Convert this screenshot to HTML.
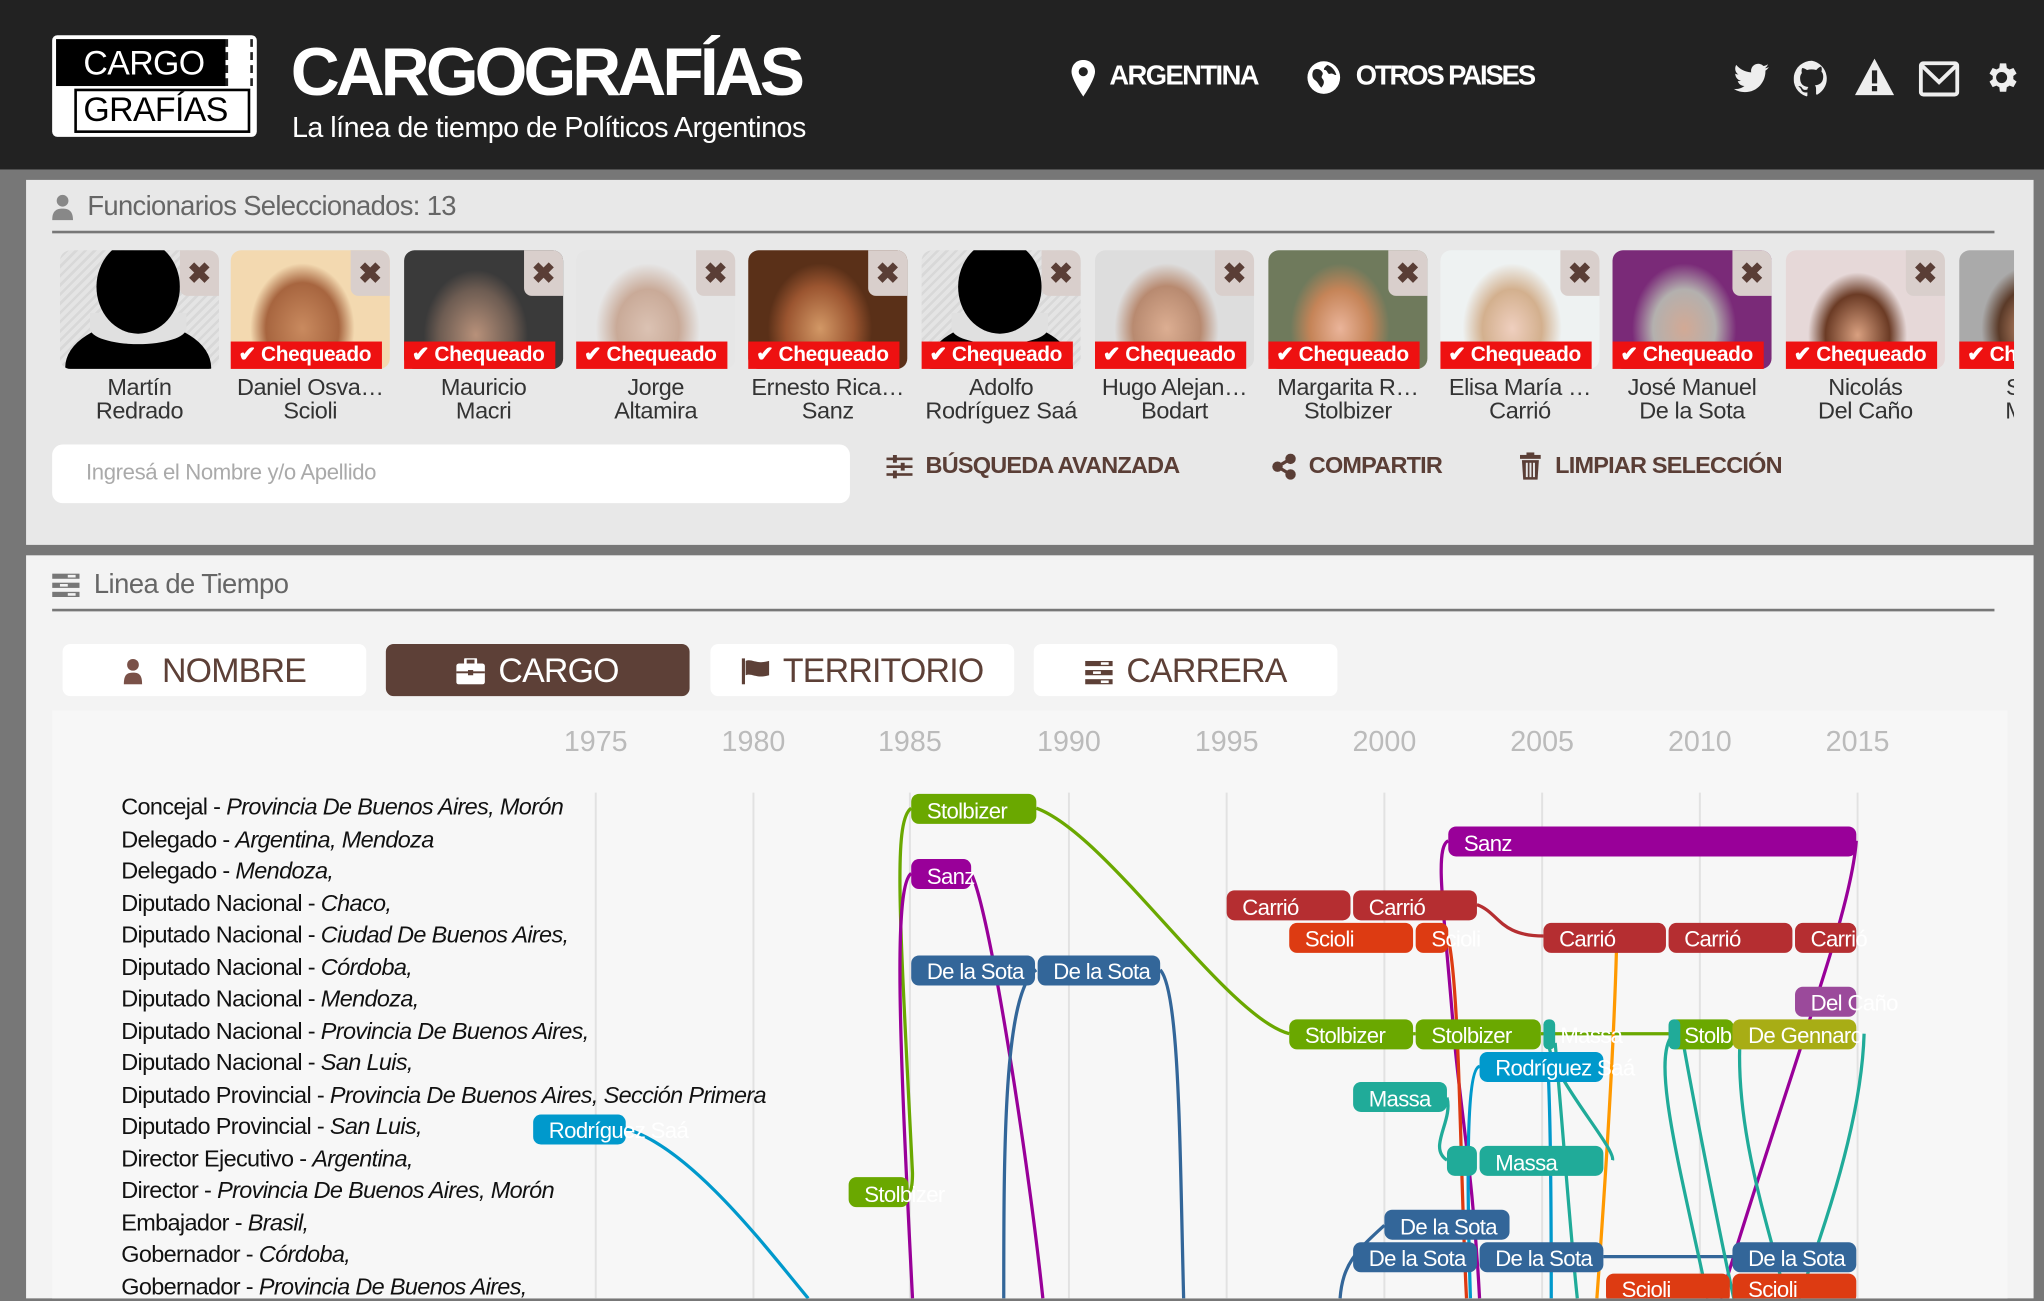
<!DOCTYPE html>
<html><head><meta charset="utf-8">
<style>
*{margin:0;padding:0;box-sizing:border-box}
html,body{width:2044px;height:1298px;overflow:hidden;background:#777}
#w{position:absolute;left:0;top:0;width:1568px;height:996px;transform:scale(1.30357);transform-origin:0 0;font-family:"Liberation Sans Narrow","Liberation Sans",sans-serif;background:#777}
.a{position:absolute}
.hdr{left:0;top:0;width:1568px;height:130px;background:#222}
.p1{left:20px;top:138px;width:1540px;height:280px;background:#e8e8e8}
.p2{left:20px;top:426px;width:1540px;height:570px;background:#f3f3f3}
.card{position:absolute;top:192px;width:122px}
.ph{position:absolute;left:0;top:0;width:122px;height:91px;border-radius:8px;overflow:hidden}
.chk{position:absolute;left:0;top:70px;width:116px;height:21px;background:#ee1111;color:#fff;font:bold 16px "Liberation Sans",sans-serif;line-height:21px;padding-left:6px;white-space:nowrap;letter-spacing:-0.3px}
.x{position:absolute;right:0;top:0;width:30px;height:35px;background:#d9cfcc;border-radius:0 8px 0 6px;color:#5a3e36;font:bold 22px "Liberation Sans",sans-serif;text-align:center;line-height:35px}
.nm{position:absolute;top:96px;left:-6px;width:134px;text-align:center;font-size:18px;line-height:18px;color:#333;white-space:nowrap;letter-spacing:-0.3px}
.btn{color:#5a3e36;font-weight:bold;font-size:18px;top:347px;letter-spacing:-0.6px}
.tab{top:494px;height:40px;width:233px;background:#fff;border-radius:6px;color:#5d4037;font-size:26px;text-align:center;line-height:40px;letter-spacing:-0.6px}
.yr{top:556px;color:#bbb;font-size:22px;width:60px;text-align:center;margin-left:-30px}
.lab{left:93px;font-size:18px;color:#111;white-space:nowrap;letter-spacing:-0.5px}
.lab i{font-style:italic}
</style></head><body><div id="w">
<div class="a hdr"></div>
<div class="a" style="left:40px;top:27px;width:157px;height:78px;background:#fff;border-radius:4px"></div>
<div class="a" style="left:43px;top:30px;width:130px;height:36px;background:#000"></div>
<div class="a" style="left:173px;top:30px;width:21px;height:36px;border-left:2px dashed #222;border-right:2px dashed #222;background:#fff"></div>
<div class="a" style="left:57px;top:68px;width:135px;height:34px;background:#fff;border:2px solid #000"></div>
<div class="a" style="left:64px;top:33px;color:#fff;font:26px 'Liberation Sans',sans-serif;letter-spacing:-0.5px">CARGO</div>
<div class="a" style="left:64px;top:69px;color:#000;font:26px 'Liberation Sans',sans-serif;letter-spacing:-0.5px">GRAFÍAS</div>
<div class="a" style="left:223px;top:26px;color:#fff;font-weight:bold;font-size:52px;letter-spacing:-3px">CARGOGRAFÍAS</div>
<div class="a" style="left:224px;top:85px;color:#fff;font-size:22px;letter-spacing:-0.4px">La línea de tiempo de Políticos Argentinos</div>
<svg class="a" style="left:821px;top:46px" width="20" height="28" viewBox="0 0 20 28"><path d="M10 0C4.5 0 1 4 1 9c0 6 9 19 9 19s9-13 9-19c0-5-3.5-9-9-9z" fill="#fff"/><circle cx="10" cy="9" r="3.5" fill="#222"/></svg>
<div class="a" style="left:851px;top:47px;color:#fff;font-size:21px;font-weight:bold;letter-spacing:-1.2px">ARGENTINA</div>
<svg class="a" style="left:1002px;top:46px" width="27" height="27" viewBox="0 0 28 28"><circle cx="14" cy="14" r="13" fill="#fff"/><path d="M6 8c3-2 6 0 7 2s-2 3 0 5 1 5-1 7c-2-2-3-5-5-6s-3-5-1-8zM17 4c3 1 6 4 7 8-2 0-3-2-5-1s-2-3-4-3 0-3 2-4z" fill="#222"/></svg>
<div class="a" style="left:1040px;top:47px;color:#fff;font-size:21px;font-weight:bold;letter-spacing:-1.6px">OTROS PAISES</div>
<svg class="a" style="left:1330px;top:48px" width="27" height="24" viewBox="0 0 24 20"><path d="M24 2.4c-.9.4-1.8.6-2.8.8 1-.6 1.8-1.6 2.2-2.7-1 .6-2 1-3.1 1.2A4.9 4.9 0 0 0 11.9 6C7.8 5.800 4.200 3.900 1.700.9c-1.4 2.4-.6 5.2 1.5 6.6-.8 0-1.6-.3-2.2-.6 0 2.4 1.7 4.4 3.9 4.9-.7.2-1.5.2-2.2.1.6 2 2.4 3.4 4.6 3.4A9.9 9.9 0 0 1 0 17.3 14 14 0 0 0 7.5 19.5c9.1 0 14.1-7.5 14.1-14.1v-.6c1-.7 1.8-1.6 2.4-2.4z" fill="#eee"/></svg>
<svg class="a" style="left:1376px;top:46px" width="28" height="28" viewBox="0 0 24 24"><path d="M12 .5a12 12 0 0 0-3.8 23.4c.6.1.8-.3.8-.6v-2c-3.3.7-4-1.6-4-1.6-.6-1.4-1.4-1.8-1.4-1.8-1-.7.1-.7.1-.7 1.2.1 1.8 1.2 1.8 1.2 1 1.8 2.8 1.3 3.5 1 .1-.8.4-1.3.7-1.6-2.7-.3-5.5-1.3-5.5-6 0-1.300.5-2.400 1.200-3.200-.1-.3-.5-1.5.1-3.2 0 0 1-.3 3.3 1.2a11.5 11.5 0 0 1 6 0C17.1 4.1 18.1 4.4 18.1 4.4c.7 1.7.2 2.9.1 3.2.8.8 1.2 1.9 1.2 3.2 0 4.6-2.8 5.6-5.5 5.9.4.4.8 1.1.8 2.2v3.3c0 .3.2.7.8.6A12 12 0 0 0 12 .5z" fill="#eee"/></svg>
<svg class="a" style="left:1422px;top:44px" width="32" height="30" viewBox="0 0 32 30"><path d="M16 1L31 29H1z" fill="#eee"/><rect x="14" y="10" width="4" height="10" fill="#222"/><rect x="14" y="22" width="4" height="4" fill="#222"/></svg>
<svg class="a" style="left:1472px;top:47px" width="31" height="27" viewBox="0 0 31 27"><rect x="1.5" y="1.5" width="28" height="24" rx="2" fill="none" stroke="#eee" stroke-width="3"/><path d="M2 3l13.5 13L29 3" fill="none" stroke="#eee" stroke-width="3"/></svg>
<svg class="a" style="left:1521px;top:45px" width="29" height="29" viewBox="0 0 24 24"><path d="M19.4 13a7.8 7.8 0 0 0 0-2l2.1-1.6-2-3.5-2.5 1a7 7 0 0 0-1.7-1L14.9 3h-4l-.4 2.9a7 7 0 0 0-1.7 1l-2.5-1-2 3.5L6.4 11a7.8 7.8 0 0 0 0 2l-2.1 1.6 2 3.5 2.5-1a7 7 0 0 0 1.7 1l.4 2.9h4l.4-2.9a7 7 0 0 0 1.7-1l2.5 1 2-3.5zM12 15.5A3.5 3.5 0 1 1 12 8.5a3.5 3.5 0 0 1 0 7z" fill="#eee"/></svg>

<div class="a p1"></div>
<svg class="a" style="left:40px;top:149px" width="16" height="20" viewBox="0 0 16 20"><circle cx="8" cy="5" r="4.5" fill="#888"/><path d="M0 20c0-7 3-9 8-9s8 2 8 9z" fill="#888"/></svg>
<div class="a" style="left:67px;top:147px;color:#666;font-size:21px;letter-spacing:-0.5px">Funcionarios Seleccionados: 13</div>
<div class="a" style="left:40px;top:177px;width:1490px;height:2px;background:#777"></div>
<div class="a" style="left:40px;top:186px;width:1505px;height:150px;overflow:hidden">
<div style="position:relative;left:-40px;top:-186px">
<div class="card" style="left:46px"><div class="ph" style="background:repeating-linear-gradient(135deg,#e4e4e4 0 3px,#d8d8d8 3px 5px)"><div class="a" style="left:4px;top:55px;width:112px;height:70px;border-radius:50% 50% 0 0;background:#000"></div><div class="a" style="left:23px;top:48px;width:74px;height:24px;border-radius:0 0 50% 50%;background:#e0e0e0"></div><div class="a" style="left:28px;top:-8px;width:64px;height:72px;border-radius:50%;background:#000"></div></div><div class="x">✖</div><div class="nm">Martín<br>Redrado</div></div>
<div class="card" style="left:177px"><div class="ph" style="background:radial-gradient(ellipse 40px 50px at 55px 60px,#c98a5f,#a7653f 70%,#f3d9b0)"></div><div class="chk">✔ Chequeado</div><div class="x">✖</div><div class="nm">Daniel Osva…<br>Scioli</div></div>
<div class="card" style="left:310px"><div class="ph" style="background:radial-gradient(ellipse 40px 50px at 55px 65px,#b8917a,#6d5c52 70%,#3a3a3a)"></div><div class="chk">✔ Chequeado</div><div class="x">✖</div><div class="nm">Mauricio<br>Macri</div></div>
<div class="card" style="left:442px"><div class="ph" style="background:radial-gradient(ellipse 40px 50px at 55px 60px,#dbc2b3,#c9aa98 60%,#e6e6e6)"></div><div class="chk">✔ Chequeado</div><div class="x">✖</div><div class="nm">Jorge<br>Altamira</div></div>
<div class="card" style="left:574px"><div class="ph" style="background:radial-gradient(ellipse 40px 50px at 55px 60px,#d29866,#9b5530 65%,#5a3018)"></div><div class="chk">✔ Chequeado</div><div class="x">✖</div><div class="nm">Ernesto Rica…<br>Sanz</div></div>
<div class="card" style="left:707px"><div class="ph" style="background:repeating-linear-gradient(135deg,#e4e4e4 0 3px,#d8d8d8 3px 5px)"><div class="a" style="left:4px;top:55px;width:112px;height:70px;border-radius:50% 50% 0 0;background:#000"></div><div class="a" style="left:23px;top:48px;width:74px;height:24px;border-radius:0 0 50% 50%;background:#e0e0e0"></div><div class="a" style="left:28px;top:-8px;width:64px;height:72px;border-radius:50%;background:#000"></div></div><div class="chk">✔ Chequeado</div><div class="x">✖</div><div class="nm">Adolfo<br>Rodríguez Saá</div></div>
<div class="card" style="left:840px"><div class="ph" style="background:radial-gradient(ellipse 40px 50px at 55px 60px,#dcae92,#b88a70 65%,#ddd)"></div><div class="chk">✔ Chequeado</div><div class="x">✖</div><div class="nm">Hugo Alejan…<br>Bodart</div></div>
<div class="card" style="left:973px"><div class="ph" style="background:radial-gradient(ellipse 38px 50px at 55px 60px,#eab49a,#c58458 60%,#6f7a5c)"></div><div class="chk">✔ Chequeado</div><div class="x">✖</div><div class="nm">Margarita R…<br>Stolbizer</div></div>
<div class="card" style="left:1105px"><div class="ph" style="background:radial-gradient(ellipse 38px 50px at 55px 60px,#efcfbf,#d3b08e 60%,#eef2f2)"></div><div class="chk">✔ Chequeado</div><div class="x">✖</div><div class="nm">Elisa María …<br>Carrió</div></div>
<div class="card" style="left:1237px"><div class="ph" style="background:radial-gradient(ellipse 40px 50px at 55px 60px,#d2a995,#b3b0ae 60%,#7a2a78)"></div><div class="chk">✔ Chequeado</div><div class="x">✖</div><div class="nm">José Manuel<br>De la Sota</div></div>
<div class="card" style="left:1370px"><div class="ph" style="background:radial-gradient(ellipse 38px 48px at 55px 65px,#d9a080,#6b3b25 65%,#e6d8d8)"></div><div class="chk">✔ Chequeado</div><div class="x">✖</div><div class="nm">Nicolás<br>Del Caño</div></div>
<div class="card" style="left:1503px"><div class="ph" style="background:radial-gradient(ellipse 38px 48px at 55px 60px,#d59a78,#5a3a28 65%,#aaa)"></div><div class="chk">✔ Chequeado</div><div class="x">✖</div><div class="nm">Sergio<br>Massa</div></div>
</div></div>
<div class="a" style="left:40px;top:341px;width:612px;height:45px;background:#fff;border-radius:8px"></div>
<div class="a" style="left:66px;top:353px;color:#aaa;font-size:17px;letter-spacing:-0.3px">Ingresá el Nombre y/o Apellido</div>
<svg class="a" style="left:680px;top:349px" width="20" height="18" viewBox="0 0 20 18"><g fill="#5a3e36"><rect x="0" y="2" width="20" height="2"/><rect x="0" y="8" width="20" height="2"/><rect x="0" y="14" width="20" height="2"/><rect x="5" y="0" width="3" height="6"/><rect x="11" y="6" width="3" height="6"/><rect x="5" y="12" width="3" height="6"/></g></svg>
<div class="a btn" style="left:710px">BÚSQUEDA AVANZADA</div>
<svg class="a" style="left:975px;top:348px" width="20" height="20" viewBox="0 0 20 20"><g fill="#5a3e36"><circle cx="15" cy="4" r="4"/><circle cx="15" cy="16" r="4"/><circle cx="5" cy="10" r="4"/></g><path d="M15 4L5 10l10 6" stroke="#5a3e36" stroke-width="2.5" fill="none"/></svg>
<div class="a btn" style="left:1004px">COMPARTIR</div>
<svg class="a" style="left:1166px;top:347px" width="16" height="21" viewBox="0 0 16 21"><g fill="#5a3e36"><rect x="0" y="2" width="16" height="3"/><rect x="5" y="0" width="6" height="3"/><path d="M1.5 6h13l-1 15h-11z"/></g><g fill="#e8e8e8"><rect x="4.5" y="8" width="1.5" height="11"/><rect x="7.3" y="8" width="1.5" height="11"/><rect x="10" y="8" width="1.5" height="11"/></g></svg>
<div class="a btn" style="left:1193px">LIMPIAR SELECCIÓN</div>

<div class="a p2"></div>
<svg class="a" style="left:40px;top:440px" width="21" height="18" viewBox="0 0 21 18"><g fill="#777"><rect x="0" y="0" width="21" height="4"/><rect x="0" y="7" width="21" height="4"/><rect x="0" y="14" width="21" height="4"/></g><g fill="#f3f3f3"><rect x="12" y="1" width="6" height="2"/><rect x="6" y="8" width="6" height="2"/><rect x="12" y="15" width="6" height="2"/></g></svg>
<div class="a" style="left:72px;top:437px;color:#666;font-size:21px;letter-spacing:-0.4px">Linea de Tiempo</div>
<div class="a" style="left:40px;top:467px;width:1490px;height:2px;background:#777"></div>
<div class="a tab" style="left:48px"><svg style="vertical-align:-2px;margin-right:14px" width="16" height="20" viewBox="0 0 16 20"><circle cx="8" cy="5" r="4.5" fill="#7a5148"/><path d="M1 20c0-7 2-9 7-9s7 2 7 9z" fill="#7a5148"/></svg>NOMBRE</div>
<div class="a tab" style="left:296px;background:#5d4037;color:#fff"><svg style="vertical-align:-2px;margin-right:10px" width="22" height="20" viewBox="0 0 22 20"><rect x="7" y="0" width="8" height="5" rx="1" fill="none" stroke="#fff" stroke-width="2"/><rect x="0" y="4" width="22" height="16" rx="2" fill="#fff"/><rect x="0" y="10" width="22" height="1.5" fill="#5d4037"/><rect x="9" y="9" width="4" height="4" fill="#5d4037"/></svg>CARGO</div>
<div class="a tab" style="left:545px"><svg style="vertical-align:-2px;margin-right:10px" width="22" height="20" viewBox="0 0 22 20"><rect x="0" y="0" width="2.5" height="20" fill="#5d4037"/><path d="M3 2c5-2 8 3 18 0v11c-10 3-13-2-18 0z" fill="#5d4037"/></svg>TERRITORIO</div>
<div class="a tab" style="left:793px"><svg style="vertical-align:-2px;margin-right:10px" width="22" height="18" viewBox="0 0 21 18"><g fill="#5d4037"><rect x="0" y="0" width="21" height="4"/><rect x="0" y="7" width="21" height="4"/><rect x="0" y="14" width="21" height="4"/></g><g fill="#fff"><rect x="12" y="1" width="6" height="2"/><rect x="6" y="8" width="6" height="2"/><rect x="12" y="15" width="6" height="2"/></g></svg>CARRERA</div>
<div class="a" style="left:40px;top:545px;width:1500px;height:451px;background:#f7f7f7"></div>
<div class="a yr" style="left:457px">1975</div><div class="a yr" style="left:578px">1980</div><div class="a yr" style="left:698px">1985</div><div class="a yr" style="left:820px">1990</div><div class="a yr" style="left:941px">1995</div><div class="a yr" style="left:1062px">2000</div><div class="a yr" style="left:1183px">2005</div><div class="a yr" style="left:1304px">2010</div><div class="a yr" style="left:1425px">2015</div>
<svg class="a" style="left:0;top:0" width="1568" height="996" viewBox="0 0 1568 996">
<g stroke="#e2e2e2" stroke-width="1.5"><path d="M457 608V996M578 608V996M698 608V996M820 608V996M941 608V996M1062 608V996M1183 608V996M1304 608V996M1425 608V996"/></g>
<g fill="none" stroke-width="2.5">
<path d="M795 620C850 640 940 780 989 793" stroke="#6aa800"/>
<path d="M699 620C685 630 690 700 700 900 700 915 697 915 697 915" stroke="#6aa800"/>
<path d="M1084 793H1086M1182 793H1280" stroke="#6aa800"/>
<path d="M745 670C760 700 790 900 800 996" stroke="#990099"/>
<path d="M699 670C685 680 690 800 700 996" stroke="#990099"/>
<path d="M1111 645C1100 650 1108 700 1115 790 1120 850 1130 900 1135 996" stroke="#990099"/>
<path d="M1424 645C1420 700 1380 800 1320 996" stroke="#990099"/>
<path d="M890 744C905 760 905 880 908 996" stroke="#336699"/>
<path d="M795 744C770 760 770 880 770 996" stroke="#336699"/>
<path d="M1062 940C1040 960 1030 970 1028 996M1230 964H1329" stroke="#336699"/>
<path d="M1133 694C1150 700 1150 718 1184 718" stroke="#b52e31"/>
<path d="M1111 720C1120 760 1120 900 1125 996" stroke="#dd3b12"/>
<path d="M1240 730C1238 800 1232 900 1225 996" stroke="#ff9900"/>
<path d="M480 866C530 880 590 960 620 996" stroke="#0099cc"/>
<path d="M1135 818C1125 820 1125 900 1128 996M1188 830C1190 880 1190 950 1190 996" stroke="#0099cc"/>
<path d="M1110 842C1115 860 1095 880 1110 890M1189 795C1180 815 1240 880 1237 890M1284 793C1265 810 1290 900 1310 996M1290 793C1300 850 1320 950 1330 996M1430 793C1428 860 1400 940 1380 996M1335 793C1330 870 1360 950 1370 996M1193 800C1200 880 1205 950 1210 996" stroke="#20ab99"/>
</g>
<g font-family="Liberation Sans Narrow, Liberation Sans, sans-serif" font-size="17" fill="#fff" letter-spacing="-0.5">
<rect x="699" y="609" width="96" height="23" rx="6" fill="#6aa800"/><text x="711" y="628">Stolbizer</text>
<rect x="1111" y="634" width="313" height="23" rx="6" fill="#990099"/><text x="1123" y="653">Sanz</text>
<rect x="699" y="659" width="46" height="23" rx="6" fill="#990099"/><text x="711" y="678">Sanz</text>
<rect x="699" y="733" width="95" height="23" rx="6" fill="#336699"/><text x="711" y="751">De la Sota</text>
<rect x="796" y="733" width="94" height="23" rx="6" fill="#336699"/><text x="808" y="751">De la Sota</text>
<rect x="941" y="683" width="95" height="23" rx="6" fill="#b52e31"/><text x="953" y="702">Carrió</text>
<rect x="1038" y="683" width="95" height="23" rx="6" fill="#b52e31"/><text x="1050" y="702">Carrió</text>
<rect x="989" y="708" width="95" height="23" rx="6" fill="#dd3b12"/><text x="1001" y="726">Scioli</text>
<rect x="1086" y="708" width="25" height="23" rx="6" fill="#dd3b12"/><text x="1098" y="726">Scioli</text>
<rect x="1184" y="708" width="94" height="23" rx="6" fill="#b52e31"/><text x="1196" y="726">Carrió</text>
<rect x="1280" y="708" width="95" height="23" rx="6" fill="#b52e31"/><text x="1292" y="726">Carrió</text>
<rect x="1377" y="708" width="47" height="23" rx="6" fill="#b52e31"/><text x="1389" y="726">Carrió</text>
<rect x="1377" y="757" width="47" height="23" rx="6" fill="#9b4a9b"/><text x="1389" y="775">Del Caño</text>
<rect x="989" y="782" width="95" height="23" rx="6" fill="#6aa800"/><text x="1001" y="800">Stolbizer</text>
<rect x="1086" y="782" width="96" height="23" rx="6" fill="#6aa800"/><text x="1098" y="800">Stolbizer</text>
<rect x="1184" y="782" width="9" height="23" rx="4" fill="#20ab99"/><text x="1197" y="800">Massa</text>
<rect x="1280" y="782" width="50" height="23" rx="6" fill="#6aa800"/><rect x="1280" y="782" width="9" height="23" rx="4" fill="#20ab99"/><text x="1292" y="800">Stolbi</text>
<rect x="1329" y="782" width="95" height="23" rx="6" fill="#a8ad15"/><text x="1341" y="800">De Gennaro</text>
<rect x="1135" y="807" width="95" height="23" rx="6" fill="#0099cc"/><text x="1147" y="825">Rodríguez Saá</text>
<rect x="409" y="855" width="71" height="23" rx="6" fill="#0099cc"/><text x="421" y="873">Rodríguez Saá</text>
<rect x="1038" y="830" width="72" height="23" rx="6" fill="#20ab99"/><text x="1050" y="849">Massa</text>
<rect x="1110" y="879" width="23" height="23" rx="6" fill="#20ab99"/>
<rect x="1135" y="879" width="95" height="23" rx="6" fill="#20ab99"/><text x="1147" y="898">Massa</text>
<rect x="651" y="903" width="46" height="23" rx="6" fill="#6aa800"/><text x="663" y="922">Stolbizer</text>
<rect x="1062" y="928" width="96" height="23" rx="6" fill="#336699"/><text x="1074" y="947">De la Sota</text>
<rect x="1038" y="953" width="95" height="23" rx="6" fill="#336699"/><text x="1050" y="971">De la Sota</text>
<rect x="1135" y="953" width="95" height="23" rx="6" fill="#336699"/><text x="1147" y="971">De la Sota</text>
<rect x="1329" y="953" width="95" height="23" rx="6" fill="#336699"/><text x="1341" y="971">De la Sota</text>
<rect x="1232" y="977" width="95" height="23" rx="6" fill="#dd3b12"/><text x="1244" y="995">Scioli</text>
<rect x="1329" y="977" width="95" height="23" rx="6" fill="#dd3b12"/><text x="1341" y="995">Scioli</text>
</g>
</svg>
<div class="a lab" style="top:609px">Concejal - <i>Provincia De Buenos Aires, Morón</i></div>
<div class="a lab" style="top:634px">Delegado - <i>Argentina, Mendoza</i></div>
<div class="a lab" style="top:658px">Delegado - <i>Mendoza,</i></div>
<div class="a lab" style="top:683px">Diputado Nacional - <i>Chaco,</i></div>
<div class="a lab" style="top:707px">Diputado Nacional - <i>Ciudad De Buenos Aires,</i></div>
<div class="a lab" style="top:732px">Diputado Nacional - <i>Córdoba,</i></div>
<div class="a lab" style="top:756px">Diputado Nacional - <i>Mendoza,</i></div>
<div class="a lab" style="top:781px">Diputado Nacional - <i>Provincia De Buenos Aires,</i></div>
<div class="a lab" style="top:805px">Diputado Nacional - <i>San Luis,</i></div>
<div class="a lab" style="top:830px">Diputado Provincial - <i>Provincia De Buenos Aires, Sección Primera</i></div>
<div class="a lab" style="top:854px">Diputado Provincial - <i>San Luis,</i></div>
<div class="a lab" style="top:879px">Director Ejecutivo - <i>Argentina,</i></div>
<div class="a lab" style="top:903px">Director - <i>Provincia De Buenos Aires, Morón</i></div>
<div class="a lab" style="top:928px">Embajador - <i>Brasil,</i></div>
<div class="a lab" style="top:952px">Gobernador - <i>Córdoba,</i></div>
<div class="a lab" style="top:977px">Gobernador - <i>Provincia De Buenos Aires,</i></div>
</div></body></html>
